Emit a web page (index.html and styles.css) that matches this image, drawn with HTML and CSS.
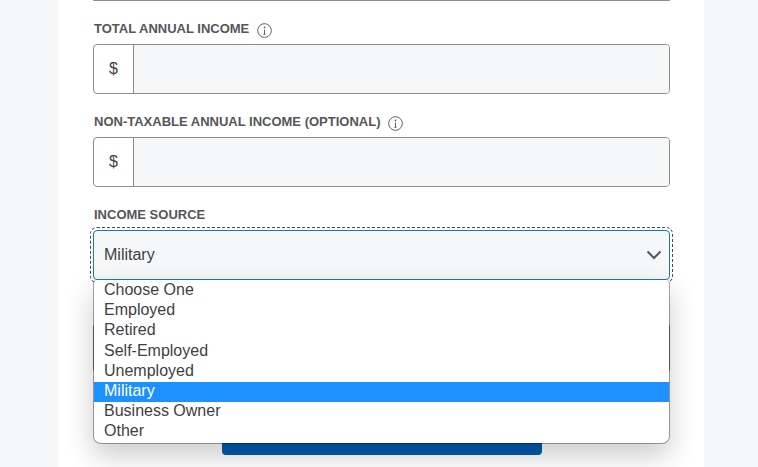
FILE: index.html
```html
<!DOCTYPE html>
<html lang="en">
<head>
    <meta charset="UTF-8">
    <meta name="viewport" content="width=device-width, initial-scale=1.0">
    <title>Income</title>
    <link rel="stylesheet" href="styles.css">
</head>
<body>
    <div class="panel">
        <div class="prev-field"></div>

        <div class="field">
            <div class="label">
                TOTAL ANNUAL INCOME
                <svg class="info" viewBox="0 0 16 16"><circle cx="8" cy="8" r="7.3"/><path d="M8 7v5M6.8 12h2.4"/><circle class="dot" cx="8" cy="4.7" r="0.9"/></svg>
            </div>
            <div class="money">
                <span class="prefix">$</span>
                <span class="money-input"></span>
            </div>
        </div>

        <div class="field">
            <div class="label">
                NON-TAXABLE ANNUAL INCOME (OPTIONAL)
                <svg class="info" viewBox="0 0 16 16"><circle cx="8" cy="8" r="7.3"/><path d="M8 7v5M6.8 12h2.4"/><circle class="dot" cx="8" cy="4.7" r="0.9"/></svg>
            </div>
            <div class="money">
                <span class="prefix">$</span>
                <span class="money-input"></span>
            </div>
        </div>

        <div class="field">
            <div class="label">INCOME SOURCE</div>
            <div class="select-wrap">
                <div class="select">
                    <span>Military</span>
                    <svg class="chevron" viewBox="0 0 16 10"><path d="M1.5 1.5 8 8l6.5-6.5"/></svg>
                </div>
                <ul class="menu">
                    <li>Choose One</li>
                    <li>Employed</li>
                    <li>Retired</li>
                    <li>Self-Employed</li>
                    <li>Unemployed</li>
                    <li class="selected">Military</li>
                    <li>Business Owner</li>
                    <li>Other</li>
                </ul>
            </div>
        </div>

        <!-- field that sits behind the open menu -->
        <div class="field">
            <div class="label"></div>
            <div class="money"></div>
        </div>

        <div class="submit"></div>
    </div>
</body>
</html>
```

FILE: styles.css
```css
html, body {
    margin: 0;
    height: 467px;
    overflow: hidden;
}
body {
    background-color: #f6f7f9;
    font-family: "Liberation Sans", Arial, sans-serif;
}
.panel {
    width: 645px;
    height: 467px;
    margin-left: 59px;
    padding: 0 34px;
    box-sizing: border-box;
    background-color: white;
}
.prev-field {
    border-bottom: 1px solid #8c8c8c;
    border-radius: 0 0 4px 4px;
    margin-bottom: 19px;
}
.field {
    margin-bottom: 19px;
}
.label {
    display: flex;
    align-items: center;
    height: 18px;
    margin-bottom: 6px;
    padding-left: 1px;
    font-size: 13px;
    font-weight: bold;
    line-height: 18px;
    color: #55565a;
}
.info {
    width: 15px;
    height: 15px;
    margin: 2px 0 0 8px;
    fill: none;
    stroke: #55565a;
    stroke-width: 1;
}
.info .dot {
    fill: #55565a;
    stroke: none;
}
.money {
    display: flex;
    height: 50px;
    box-sizing: border-box;
    border: 1px solid #8c8c8c;
    border-radius: 4px;
    overflow: hidden;
}
.prefix {
    width: 40px;
    flex: none;
    box-sizing: border-box;
    border-right: 1px solid #8c8c8c;
    text-align: center;
    font-size: 16px;
    line-height: 48px;
    color: #3f4044;
}
.money-input {
    flex: 1;
    background-color: #f6f7f9;
}
.select-wrap {
    position: relative;
}
.select {
    display: flex;
    align-items: center;
    justify-content: space-between;
    height: 50px;
    box-sizing: border-box;
    padding: 0 7px 0 10px;
    border: 1px solid #1878b8;
    border-radius: 4px;
    outline: 1px dashed #48494d;
    outline-offset: 2px;
    background-color: #f6f7f9;
    font-size: 16px;
    color: #3f4044;
}
.chevron {
    width: 16px;
    height: 10px;
    fill: none;
    stroke: #55565a;
    stroke-width: 2;
}
.menu {
    position: absolute;
    top: 50px;
    left: 0;
    right: 0;
    z-index: 2;
    list-style: none;
    margin: 0;
    padding: 1.3px 0 0.6px;
    box-sizing: border-box;
    background-color: white;
    background-clip: padding-box;
    border: 1px solid rgba(0,0,0,0.35);
    border-top: none;
    border-radius: 4px 4px 8px 8px;
    box-shadow: 0 12px 28px rgba(0,0,0,0.2);
    font-size: 16px;
    color: #3f4044;
}
.menu li {
    padding-left: 10px;
    height: 20.1px;
    line-height: 17px;
}
.menu li.selected {
    background-color: #1e90ff;
    color: white;
}
.submit {
    width: 320px;
    height: 50px;
    margin: 32px auto 0;
    border-radius: 4px;
    background-color: #005cb0;
}
```
